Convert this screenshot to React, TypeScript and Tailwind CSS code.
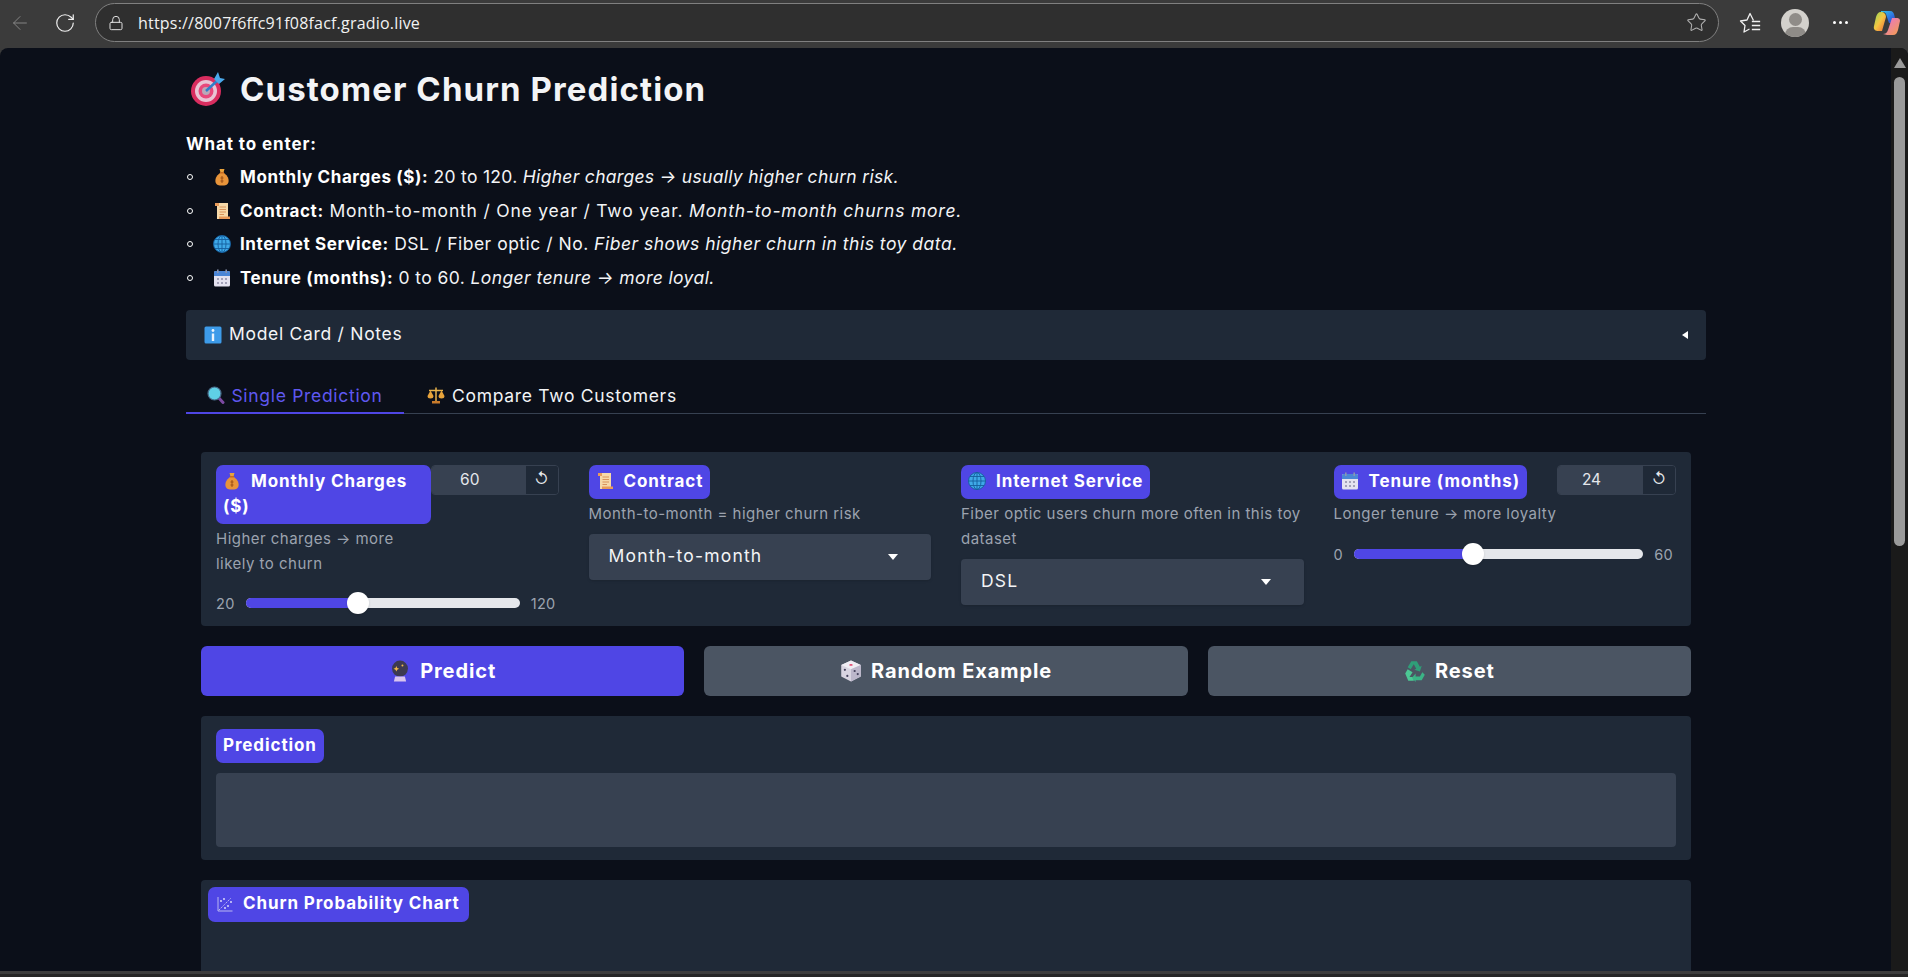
import React from 'react';
import { ArrowLeft, RotateCw, Lock, Star } from 'lucide-react';

type EmojiProps = { size?: number };

function Target({ size = 36 }: EmojiProps) {
  return (
    <svg width={size} height={size} viewBox="0 0 36 36" className="shrink-0">
      <circle cx="16" cy="20" r="15" fill="#d92d5f" />
      <circle cx="16" cy="20" r="11" fill="#e9c4d4" />
      <circle cx="16" cy="20" r="7.5" fill="#e8487b" />
      <circle cx="16" cy="20" r="4" fill="#b9a8b8" />
      <path d="M16 20 L28 9" stroke="#2f7fc9" strokeWidth="2.5" />
      <path d="M24 8 L28 1 L30 7 L35 8 L29 13 Z" fill="#4aa8ea" />
    </svg>
  );
}

function MoneyBag({ size = 18 }: EmojiProps) {
  return (
    <svg width={size} height={size} viewBox="0 0 18 18" className="shrink-0">
      <path d="M6.5 1 L11.5 1 L10.5 4.5 L7.5 4.5 Z" fill="#e9a23b" />
      <path d="M7 5 C3 8 2 11 2.5 14 C3 17 6 17.5 9 17.5 C12 17.5 15 17 15.5 14 C16 11 15 8 11 5 Z" fill="#e8943a" />
      <rect x="7" y="4" width="4" height="1.5" fill="#c56a20" />
      <path d="M9 8 V15 M7.5 10 H10.5 M7.5 13 H10.5" stroke="#9a4f16" strokeWidth="1" />
    </svg>
  );
}

function ScrollIcon({ size = 18 }: EmojiProps) {
  return (
    <svg width={size} height={size} viewBox="0 0 18 18" className="shrink-0">
      <rect x="4" y="1" width="11" height="16" fill="#f7d9a8" />
      <path d="M2 1 H6 V4 H2 Z" fill="#e89b5a" />
      <path d="M6 17 H17 V14.5 H6 Z" fill="#e89b5a" />
      <path d="M6.5 5 H13 M6.5 7.5 H13 M6.5 10 H13 M6.5 12.5 H11" stroke="#d9935a" strokeWidth="1" />
    </svg>
  );
}

function Globe({ size = 18 }: EmojiProps) {
  return (
    <svg width={size} height={size} viewBox="0 0 18 18" className="shrink-0">
      <circle cx="9" cy="9" r="8.5" fill="#3fa9e8" />
      <g fill="none" stroke="#155f9e" strokeWidth="0.9">
        <circle cx="9" cy="9" r="8.5" />
        <ellipse cx="9" cy="9" rx="4" ry="8.5" />
        <path d="M9 .5 V17.5 M.5 9 H17.5 M2 4.5 H16 M2 13.5 H16" />
      </g>
    </svg>
  );
}

function Calendar({ size = 18 }: EmojiProps) {
  return (
    <svg width={size} height={size} viewBox="0 0 18 18" className="shrink-0">
      <rect x="1" y="2" width="16" height="15.5" rx="1.5" fill="#e4e2ef" />
      <path d="M1 3.5 A1.5 1.5 0 0 1 2.5 2 H15.5 A1.5 1.5 0 0 1 17 3.5 V7 H1 Z" fill="#4b86d6" />
      <rect x="4" y="0.5" width="1.6" height="3.5" fill="#8a94b0" />
      <rect x="12.4" y="0.5" width="1.6" height="3.5" fill="#8a94b0" />
      <g fill="#a3a1b8">
        <rect x="4" y="9" width="2" height="2" />
        <rect x="8" y="9" width="2" height="2" />
        <rect x="12" y="9" width="2" height="2" />
        <rect x="4" y="13" width="2" height="2" />
        <rect x="8" y="13" width="2" height="2" />
        <rect x="12" y="13" width="2" height="2" />
      </g>
    </svg>
  );
}

function InfoIcon({ size = 18 }: EmojiProps) {
  return (
    <svg width={size} height={size} viewBox="0 0 18 18" className="shrink-0">
      <rect x="0.5" y="0.5" width="17" height="17" rx="1.5" fill="#3d9be9" />
      <circle cx="9" cy="4.5" r="1.4" fill="#eaf4fd" />
      <rect x="7.8" y="7.5" width="2.4" height="7.5" fill="#eaf4fd" />
    </svg>
  );
}

function Magnifier({ size = 18 }: EmojiProps) {
  return (
    <svg width={size} height={size} viewBox="0 0 18 18" className="shrink-0">
      <path d="M11 11 L16 16.5" stroke="#7d4aa3" strokeWidth="3" strokeLinecap="round" />
      <circle cx="7.5" cy="7.5" r="6.5" fill="#5fd0e6" stroke="#4a6d8c" strokeWidth="1.2" />
    </svg>
  );
}

function Scales({ size = 18 }: EmojiProps) {
  return (
    <svg width={size} height={size} viewBox="0 0 18 18" className="shrink-0">
      <path d="M2 4.5 H16 M9 1.5 V15" stroke="#e9b44c" strokeWidth="1.5" />
      <path d="M0.5 10 L3.5 4.5 L6.5 10 A3 2.5 0 0 1 0.5 10 Z" fill="#e8a33a" />
      <path d="M11.5 10 L14.5 4.5 L17.5 10 A3 2.5 0 0 1 11.5 10 Z" fill="#e8a33a" />
      <rect x="5" y="15" width="8" height="2.5" fill="#c97a2a" />
    </svg>
  );
}

function CrystalBall({ size = 18 }: EmojiProps) {
  return (
    <svg width={size} height={size} viewBox="0 0 18 18" className="shrink-0">
      <circle cx="9" cy="7" r="6.5" fill="#3d3a52" />
      <path d="M6 5 L6.7 6.6 L8.3 7.2 L6.7 7.9 L6 9.5 L5.3 7.9 L3.7 7.2 L5.3 6.6 Z" fill="#f2b84b" />
      <circle cx="11" cy="4.5" r="0.8" fill="#f2b84b" />
      <path d="M5 13.5 H13 L14 17.5 H4 Z" fill="#d9c4ee" />
    </svg>
  );
}

function Die({ size = 18 }: EmojiProps) {
  return (
    <svg width={size} height={size} viewBox="0 0 18 18" className="shrink-0">
      <path d="M9 .5 L17 4 V13.5 L9 17.5 L1 13.5 V4 Z" fill="#d9d5e2" />
      <path d="M9 .5 L17 4 L9 7.5 L1 4 Z" fill="#efedf4" />
      <path d="M9 7.5 V17.5 L17 13.5 V4 Z" fill="#bcb7cb" />
      <ellipse cx="9" cy="4" rx="1.4" ry="0.8" fill="#e2476e" />
      <g fill="#44415c">
        <circle cx="4" cy="8" r="0.9" />
        <circle cx="6" cy="13" r="0.9" />
        <circle cx="12" cy="9" r="0.9" />
        <circle cx="14.5" cy="11.5" r="0.9" />
      </g>
    </svg>
  );
}

function Recycle({ size = 18 }: EmojiProps) {
  return (
    <svg width={size} height={size} viewBox="0 0 18 18" className="shrink-0">
      <path d="M6 1 H10.5 L13 5.5 L14.5 4.8 L13 9.5 L8.5 8 L10 7.2 L8 3.5 L5.5 7.5 L3 6 Z" fill="#2f9e78" />
      <path d="M1 11 L3 7.5 L7 10 L4.5 14 H8 V17 H3.5 Z" fill="#4cc894" />
      <path d="M9.5 11 L9.5 13.5 H13 L15 10 L17 12 L14.5 16.5 H9.5 L9.5 18 L6.5 14.5 Z" fill="#3bb386" />
    </svg>
  );
}

function ChartIcon() {
  return (
    <svg width="16" height="16" viewBox="0 0 16 16" className="shrink-0" fill="none" stroke="#d5d3f5" strokeWidth="0.8">
      <path d="M1 1 V15 H15.5" />
      <path d="M2 14 L14 2" strokeDasharray="1.5 1" />
      <g fill="#e6e4fb" stroke="none">
        <circle cx="4" cy="5" r="0.9" />
        <circle cx="7" cy="3" r="0.9" />
        <circle cx="11" cy="10" r="0.9" />
        <circle cx="8" cy="12" r="0.9" />
        <circle cx="14" cy="6" r="0.9" />
      </g>
    </svg>
  );
}

function FavoritesIcon() {
  return (
    <svg width="22" height="22" viewBox="0 0 22 22" fill="none" stroke="#f0f0f0" strokeWidth="1.3" strokeLinejoin="round">
      <path d="M14.5 8.5 L11 1.5 L8 8 L1.5 9 L6 13.5 L5 20 L10.5 17" />
      <path d="M13.5 9.5 H20.5 M13.5 13.5 H20.5 M13.5 17.5 H20.5" strokeLinecap="square" />
    </svg>
  );
}

function Copilot() {
  return (
    <svg width="28" height="28" viewBox="0 0 28 28">
      <defs>
        <linearGradient id="cpa" x1="0" y1="0" x2="1" y2="1">
          <stop offset="0" stopColor="#35c7e8" />
          <stop offset="0.6" stopColor="#2e6fe0" />
          <stop offset="1" stopColor="#3a3fb8" />
        </linearGradient>
        <linearGradient id="cpb" x1="0" y1="0" x2="1" y2="1">
          <stop offset="0" stopColor="#8bd85a" />
          <stop offset="0.5" stopColor="#f5c542" />
          <stop offset="1" stopColor="#f2683a" />
        </linearGradient>
        <linearGradient id="cpc" x1="0" y1="0" x2="1" y2="1">
          <stop offset="0" stopColor="#e86fd8" />
          <stop offset="1" stopColor="#f4a04a" />
        </linearGradient>
      </defs>
      <path d="M8 2 H17 C20 2 21 4 21.5 7 L23 14 H16 L13 5 C12 3 10 3 8 3 Z" fill="url(#cpa)" />
      <path d="M8 3 C5 3 4 5 3 8 L1 17 C0 21 3 22 5 22 H9 L13 8 C13 5 11 3 8 3 Z" fill="url(#cpb)" />
      <path d="M14 26 H20 C23 26 24 24 25 21 L27 12 C27 9 25 9 23 9 H19 L15 21 C14 24 12 25 10 25 Z" fill="url(#cpc)" />
    </svg>
  );
}

function Label({ icon, children }: { icon?: React.ReactNode; children: React.ReactNode }) {
  return (
    <span className="inline-block rounded-[7px] bg-[#4f46e5] px-[7px] py-[4.5px] text-[17px] leading-[25px] font-bold tracking-[0.9px] text-white">
      {icon && <span className="mr-[10px] inline-flex align-[-3px]">{icon}</span>}
      {children}
    </span>
  );
}

function NumberBox({ value, w }: { value: string; w: string }) {
  return (
    <div className={`flex h-[30px] shrink-0 overflow-hidden rounded-[4px] border border-[#374151] ${w}`}>
      <div className="flex flex-1 items-center justify-center bg-[#374151] pr-[18px] text-[15.5px] text-[#e5e7eb]">{value}</div>
      <div className="flex w-[32px] items-center justify-center bg-[#1f2937] text-[15px] text-[#e5e7eb]">↺</div>
    </div>
  );
}

function Slider({ min, max, pct }: { min: string; max: string; pct: number }) {
  return (
    <div className="flex items-center pr-[3px] text-[14.5px] tracking-[0.3px] text-[#9ca3af]">
      <span className="shrink-0">{min}</span>
      <div className="relative mx-[11px] h-[10px] flex-1 rounded-full bg-[#e5e7eb]">
        <div className="h-full rounded-l-full bg-[#4f46e5]" style={{ width: `${pct}%` }} />
        <div
          className="absolute top-[-6px] ml-[-11px] h-[22px] w-[22px] rounded-full bg-white shadow"
          style={{ left: `${pct}%` }}
        />
      </div>
      <span className="shrink-0">{max}</span>
    </div>
  );
}

function Select({ value }: { value: string }) {
  return (
    <div className="flex h-[46px] items-center justify-between rounded-[4px] bg-[#374151] pr-[33px] pl-[20px] text-[17.5px] tracking-[1.2px] text-[#f3f4f6] shadow-sm">
      <span>{value}</span>
      <span className="h-0 w-0 border-x-[5.5px] border-t-[6px] border-x-transparent border-t-white" />
    </div>
  );
}

const Help = ({ children }: { children: React.ReactNode }) => (
  <p className="mt-[2px] text-[15px] leading-[25px] tracking-[0.48px] text-[#9ca3af]">{children}</p>
);

export default function App() {
  return (
    <div
      className="flex h-[977px] w-[1908px] flex-col overflow-hidden bg-[#3b3b3b] text-white"
      style={{ fontFamily: 'Inter, "Noto Sans", sans-serif' }}
    >
      {/* browser chrome */}
      <div className="flex h-[48px] shrink-0 items-center pr-[7px] pb-[3px] pl-[9px]">
        <ArrowLeft size={22} strokeWidth={1} className="text-[#8a8a8a]" />
        <RotateCw size={22} strokeWidth={1.3} className="ml-[23px] text-[#f0f0f0]" />
        <div className="ml-[19px] flex h-[39px] flex-1 items-center rounded-full border border-[#808080] bg-[#2f2f2f] pr-[11px] pl-[12px]">
          <Lock size={16} strokeWidth={1.5} className="text-[#e0e0e0]" />
          <span className="ml-[14px] text-[16px] tracking-[0.2px] text-[#f2f2f2]" style={{ fontFamily: '"Open Sans", sans-serif' }}>
            https://8007f6ffc91f08facf.gradio.live
          </span>
          <Star size={21} strokeWidth={1.2} className="ml-auto text-[#b0b0b0]" />
        </div>
        <div className="ml-[20px] flex w-[22px] items-center justify-center">
          <FavoritesIcon />
        </div>
        <div className="relative ml-[20px] h-[28px] w-[28px] overflow-hidden rounded-full bg-[#d3d1cc]">
          <div className="absolute top-[4px] left-[8px] h-[13px] w-[13px] rounded-full bg-[#8f8c88]" />
          <div className="absolute top-[18px] left-[4px] h-[16px] w-[21px] rounded-full bg-[#8f8c88]" />
        </div>
        <div className="ml-[24px] flex w-[16px] gap-[3px]">
          <span className="h-[3px] w-[3px] rounded-full bg-white" />
          <span className="h-[3px] w-[3px] rounded-full bg-white" />
          <span className="h-[3px] w-[3px] rounded-full bg-white" />
        </div>
        <div className="ml-[24px]">
          <Copilot />
        </div>
      </div>

      {/* page + scrollbar */}
      <div className="flex min-h-0 flex-1 overflow-hidden rounded-t-[8px] bg-[#0b0f19]">
        <main className="min-w-0 flex-1 pr-[185px] pl-[186px]">
          <div className="mt-[23px] flex items-center pl-[4px]">
            <Target size={36} />
            <h1 className="ml-[14px] text-[33px] leading-[36px] font-bold tracking-[1.1px] text-[#f3f4f6]">
              Customer Churn Prediction
            </h1>
          </div>

          <p className="mt-[25px] text-[17px] leading-[24px] font-bold tracking-[0.9px]">What to enter:</p>
          <ul className="mt-[9px] flex flex-col gap-[9.5px] text-[17.5px] leading-[24px] text-[#f3f4f6]">
            <ListItem icon={<MoneyBag />} track="tracking-[0.3px]">
              <Strong>Monthly Charges ($):</Strong> 20 to 120. <i>Higher charges → usually higher churn risk.</i>
            </ListItem>
            <ListItem icon={<ScrollIcon />} track="tracking-[0.8px]">
              <Strong>Contract:</Strong> Month-to-month / One year / Two year. <i>Month-to-month churns more.</i>
            </ListItem>
            <ListItem icon={<Globe />} track="tracking-[0.5px]">
              <Strong>Internet Service:</Strong> DSL / Fiber optic / No. <i>Fiber shows higher churn in this toy data.</i>
            </ListItem>
            <ListItem icon={<Calendar />} track="tracking-[0.4px]">
              <Strong>Tenure (months):</Strong> 0 to 60. <i>Longer tenure → more loyal.</i>
            </ListItem>
          </ul>

          <div className="mt-[20px] flex h-[50px] items-center justify-between rounded-[4px] bg-[#1f2937] px-[18px] text-[17.5px] tracking-[0.7px] text-[#f3f4f6]">
            <span className="flex items-center gap-[7px]">
              <InfoIcon />
              Model Card / Notes
            </span>
            <span className="h-0 w-0 border-y-[4px] border-r-[6px] border-y-transparent border-r-white" />
          </div>

          <div className="mt-[19px] flex h-[35px] border-b border-[#374151] text-[17.5px] tracking-[0.7px]">
            <div className="flex h-[35px] w-[218px] items-start justify-center gap-[6px] border-b-[2px] border-[#4f46e5] pt-[7px] text-[#5f58f0]">
              <Magnifier />
              <span className="leading-[20px]">Single Prediction</span>
            </div>
            <div className="ml-[23px] flex items-start gap-[7px] pt-[7px] text-[#f3f4f6]">
              <Scales />
              <span className="leading-[20px]">Compare Two Customers</span>
            </div>
          </div>

          <div className="px-[15px]">
            <div className="mt-[38px] grid h-[174px] grid-cols-4 gap-x-[30px] rounded-[4px] bg-[#1f2937] px-[15px] pt-[13px]">
              <div>
                <div className="flex items-start">
                  <div className="w-[215px] shrink-0">
                    <Label icon={<MoneyBag />}>Monthly Charges ($)</Label>
                  </div>
                  <NumberBox value="60" w="flex-1" />
                </div>
                <div className="w-[200px]">
                  <Help>Higher charges → more likely to churn</Help>
                </div>
                <div className="mt-[17px]">
                  <Slider min="20" max="120" pct={41} />
                </div>
              </div>

              <div>
                <Label icon={<ScrollIcon />}>Contract</Label>
                <Help>Month-to-month = higher churn risk</Help>
                <div className="mt-[8px]">
                  <Select value="Month-to-month" />
                </div>
              </div>

              <div>
                <Label icon={<Globe />}>Internet Service</Label>
                <Help>Fiber optic users churn more often in this toy dataset</Help>
                <div className="mt-[8px]">
                  <Select value="DSL" />
                </div>
              </div>

              <div>
                <div className="flex items-start justify-between">
                  <Label icon={<Calendar />}>Tenure (months)</Label>
                  <NumberBox value="24" w="w-[119px]" />
                </div>
                <Help>Longer tenure → more loyalty</Help>
                <div className="mt-[18px]">
                  <Slider min="0" max="60" pct={41} />
                </div>
              </div>
            </div>

            <div className="mt-[20px] grid grid-cols-3 gap-x-[20px]">
              <ActionButton primary icon={<CrystalBall size={22} />} text="Predict" />
              <ActionButton icon={<Die size={22} />} text="Random Example" />
              <ActionButton icon={<Recycle size={22} />} text="Reset" />
            </div>

            <section className="mt-[20px] h-[144px] rounded-[4px] bg-[#1f2937] px-[15px] pt-[13px]">
              <Label>Prediction</Label>
              <div className="mt-[10px] h-[74px] rounded-[4px] bg-[#374151]" />
            </section>

            <section className="mt-[20px] h-[200px] rounded-[4px] bg-[#1f2937] px-[7px] pt-[7px]">
              <span className="inline-flex h-[35px] items-center gap-[10px] rounded-[7px] bg-[#4f46e5] px-[9px] text-[17px] font-bold tracking-[0.9px]">
                <ChartIcon />
                Churn Probability Chart
              </span>
            </section>
          </div>
        </main>

        {/* scrollbar */}
        <div className="flex w-[17px] shrink-0 flex-col items-center bg-[#1a1a1a] pt-[10px]">
          <span className="h-0 w-0 border-x-[6px] border-b-[10px] border-x-transparent border-b-[#9a9a9a]" />
          <div className="mt-[9px] h-[469px] w-[11px] rounded-full bg-[#9a9a9a]" />
        </div>
      </div>
      <div className="h-[6px] shrink-0 border-t-[3px] border-[#3d3d3d] bg-[#262626]" />
    </div>
  );
}

const Strong = ({ children }: { children: React.ReactNode }) => (
  <b className="text-[17px] tracking-[0.6px] text-white">{children}</b>
);

function ListItem({ icon, track, children }: { icon: React.ReactNode; track: string; children: React.ReactNode }) {
  return (
    <li className={`flex items-center ${track}`}>
      <span className="ml-[1px] h-[6px] w-[6px] shrink-0 rounded-full border border-white" />
      <span className="ml-[20px] flex w-[27px] shrink-0">{icon}</span>
      <span>{children}</span>
    </li>
  );
}

function ActionButton({ icon, text, primary }: { icon: React.ReactNode; text: string; primary?: boolean }) {
  return (
    <button
      className={`flex h-[50px] items-center justify-center gap-[9px] rounded-[6px] text-[20px] font-bold tracking-[0.9px] text-white ${
        primary ? 'bg-[#4f46e5]' : 'bg-[#4b5563]'
      }`}
    >
      {icon}
      {text}
    </button>
  );
}
